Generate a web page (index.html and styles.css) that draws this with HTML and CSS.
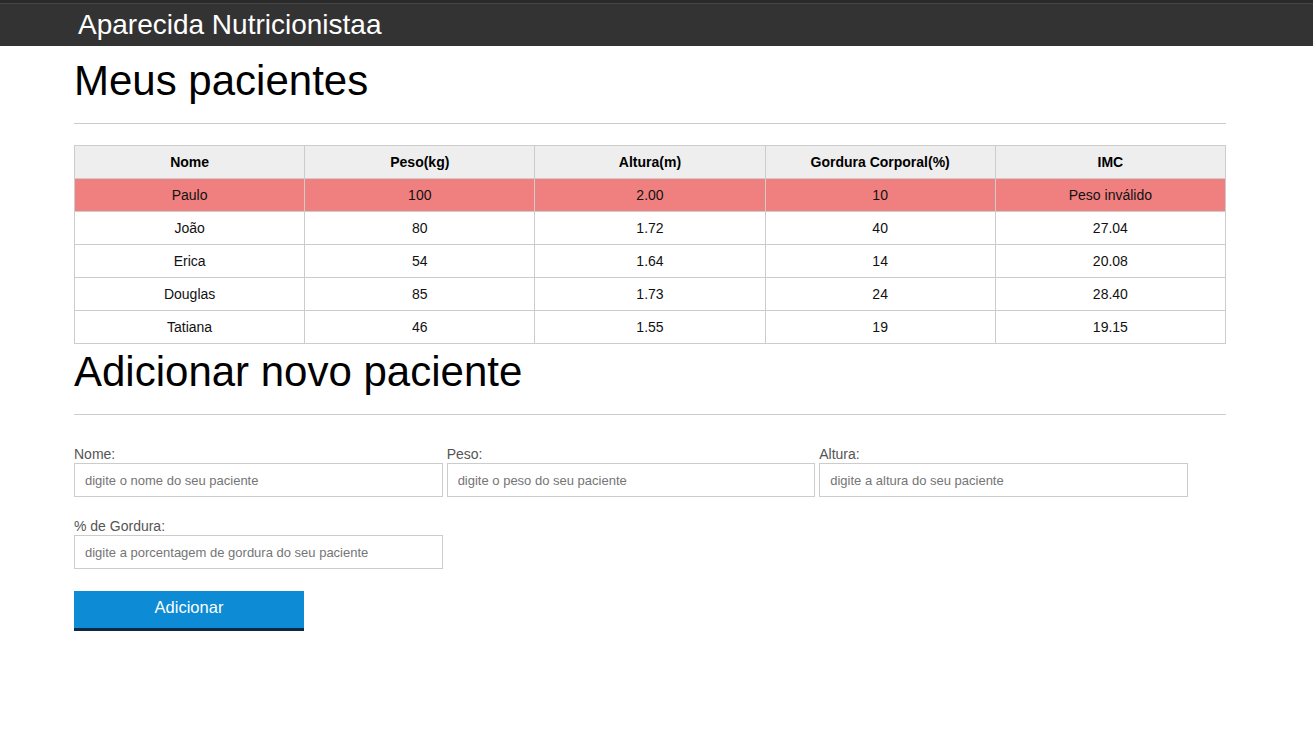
FILE: index.html
```html
<!DOCTYPE html>
<html lang="pt-BR">
<head>
<meta charset="utf-8">
<title>Aparecida Nutricionistaa</title>
<link rel="stylesheet" href="styles.css">
</head>
<body>
<header class="topbar">
  <div class="container">
    <h1 class="brand">Aparecida Nutricionistaa</h1>
  </div>
</header>
<main class="container">
  <section>
    <h2 class="section-title">Meus pacientes</h2>
    <table class="patients">
      <thead>
        <tr>
          <th>Nome</th>
          <th>Peso(kg)</th>
          <th>Altura(m)</th>
          <th>Gordura Corporal(%)</th>
          <th>IMC</th>
        </tr>
      </thead>
      <tbody>
        <tr class="invalid">
          <td>Paulo</td><td>100</td><td>2.00</td><td>10</td><td>Peso inválido</td>
        </tr>
        <tr>
          <td>João</td><td>80</td><td>1.72</td><td>40</td><td>27.04</td>
        </tr>
        <tr>
          <td>Erica</td><td>54</td><td>1.64</td><td>14</td><td>20.08</td>
        </tr>
        <tr>
          <td>Douglas</td><td>85</td><td>1.73</td><td>24</td><td>28.40</td>
        </tr>
        <tr>
          <td>Tatiana</td><td>46</td><td>1.55</td><td>19</td><td>19.15</td>
        </tr>
      </tbody>
    </table>
  </section>
  <section>
    <h2 class="section-title second">Adicionar novo paciente</h2>
    <form class="form">
      <div class="fields">
        <div class="field">
          <label for="nome">Nome:</label>
          <input id="nome" type="text" placeholder="digite o nome do seu paciente">
        </div>
        <div class="field">
          <label for="peso">Peso:</label>
          <input id="peso" type="text" placeholder="digite o peso do seu paciente">
        </div>
        <div class="field">
          <label for="altura">Altura:</label>
          <input id="altura" type="text" placeholder="digite a altura do seu paciente">
        </div>
        <div class="field">
          <label for="gordura">% de Gordura:</label>
          <input id="gordura" type="text" placeholder="digite a porcentagem de gordura do seu paciente">
        </div>
      </div>
      <button type="button" class="btn">Adicionar</button>
    </form>
  </section>
</main>
</body>
</html>
```

FILE: styles.css
```css
* {
  box-sizing: border-box;
}

body {
  margin: 0;
  font-family: "Liberation Sans", Arial, sans-serif;
  color: #000;
  background: #fff;
}

.container {
  width: 1152px;
  margin-left: 74px;
}

.topbar {
  height: 46px;
  background: linear-gradient(#2a2a2a 0, #2a2a2a 3px, #474747 3px, #474747 4px, #333 4px);
  padding-top: 9px;
}

.brand {
  margin: 0 0 0 4px;
  font-size: 28px;
  font-weight: normal;
  line-height: 32px;
  color: #fff;
}

.section-title {
  margin: 11px 0 0;
  font-size: 42px;
  font-weight: normal;
  line-height: 48px;
  padding-bottom: 18px;
  border-bottom: 1px solid #ccc;
}

.section-title.second {
  margin-top: 4px;
}

.patients {
  margin-top: 21px;
  width: 1152px;
  border-collapse: collapse;
  table-layout: fixed;
  font-size: 14px;
}

.patients th,
.patients td {
  border: 1px solid #ccc;
  height: 33px;
  padding: 0;
  text-align: center;
  vertical-align: middle;
}

.patients th {
  background: #eee;
  font-weight: bold;
}

.patients td {
  color: #111;
}

.patients .invalid td {
  background: #f08080;
}

.form {
  padding-top: 31px;
}

.fields {
  display: flex;
  flex-wrap: wrap;
  column-gap: 4px;
  row-gap: 21px;
}

.field {
  width: 32%;
  display: flex;
  flex-direction: column;
}

.field label {
  font-size: 14px;
  line-height: 17px;
  color: #555;
}

.field input {
  height: 34px;
  border: 1px solid #ccc;
  padding: 0 10px;
  font-family: "Liberation Sans", Arial, sans-serif;
  font-size: 13px;
  color: #333;
  outline: none;
}

.field input::placeholder {
  color: #757575;
}

.btn {
  margin-top: 22px;
  width: 230px;
  height: 40px;
  border: 0;
  border-bottom: 3px solid #0b2b45;
  background: #0d8bd4;
  color: #fff;
  font-family: "Liberation Sans", Arial, sans-serif;
  font-size: 16.5px;
  padding: 0 0 4px;
  cursor: pointer;
}
```
